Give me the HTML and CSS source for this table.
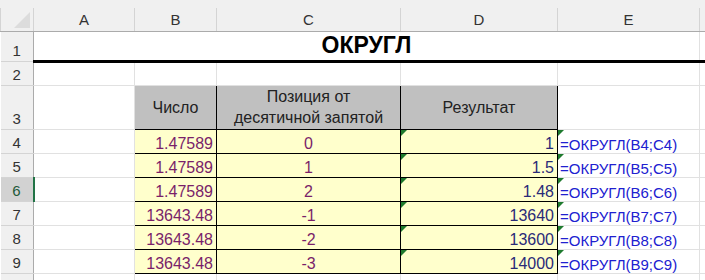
FILE: index.html
```html
<!doctype html>
<html lang="ru">
<head>
    <meta charset="utf-8">
    <title>ОКРУГЛ</title>
    <link rel="stylesheet" href="styles.css">
</head>
<body>
<div class="strip"></div>
<table class="sheet">
    <colgroup>
        <col class="c-hdr"><col class="c-a"><col class="c-b"><col class="c-c"><col class="c-d"><col class="c-e"><col class="c-f">
    </colgroup>
    <tr class="r-cols">
        <th class="corner"><span class="tri"></span></th>
        <th>A</th><th>B</th><th>C</th><th>D</th><th>E</th><th></th>
    </tr>
    <tr class="r1">
        <th class="rh">1</th>
        <td class="title" colspan="5">ОКРУГЛ</td>
        <td class="thick"></td>
    </tr>
    <tr class="r2">
        <th class="rh">2</th>
        <td></td><td></td><td></td><td></td><td></td><td></td>
    </tr>
    <tr class="r3">
        <th class="rh">3</th>
        <td></td>
        <td class="head">Число</td>
        <td class="head">Позиция от<br>десятичной запятой</td>
        <td class="head">Результат</td>
        <td class="after"></td><td></td>
    </tr>
    <tr>
        <th class="rh">4</th><td></td>
        <td class="num val">1.47589</td><td class="pos">0</td><td class="num res flag">1</td>
        <td class="formula flag after">=ОКРУГЛ(B4;C4)</td><td></td>
    </tr>
    <tr>
        <th class="rh">5</th><td></td>
        <td class="num val">1.47589</td><td class="pos">1</td><td class="num res flag">1.5</td>
        <td class="formula flag after">=ОКРУГЛ(B5;C5)</td><td></td>
    </tr>
    <tr>
        <th class="rh active">6</th><td></td>
        <td class="num val">1.47589</td><td class="pos">2</td><td class="num res flag">1.48</td>
        <td class="formula flag after">=ОКРУГЛ(B6;C6)</td><td></td>
    </tr>
    <tr>
        <th class="rh">7</th><td></td>
        <td class="num val">13643.48</td><td class="pos">-1</td><td class="num res flag">13640</td>
        <td class="formula flag after">=ОКРУГЛ(B7;C7)</td><td></td>
    </tr>
    <tr>
        <th class="rh">8</th><td></td>
        <td class="num val">13643.48</td><td class="pos">-2</td><td class="num res flag">13600</td>
        <td class="formula flag after">=ОКРУГЛ(B8;C8)</td><td></td>
    </tr>
    <tr>
        <th class="rh">9</th><td></td>
        <td class="num val">13643.48</td><td class="pos">-3</td><td class="num res flag">14000</td>
        <td class="formula flag after">=ОКРУГЛ(B9;C9)</td><td></td>
    </tr>
    <tr class="r10">
        <th class="rh"></th>
        <td></td><td></td><td></td><td></td><td></td><td></td>
    </tr>
</table>
</body>
</html>
```

FILE: styles.css
```css
body {
	margin: 0;
	background: #ffffff;
	font-family: "Liberation Sans", Arial, sans-serif;
	overflow: hidden;
}
.strip {
	height: 8px;
	background: #f0f0f0;
}
table.sheet {
	border-collapse: collapse;
	table-layout: fixed;
	width: 720px;
}
col.c-hdr { width: 33px; }
col.c-a { width: 101px; }
col.c-b { width: 82px; }
col.c-c { width: 184px; }
col.c-d { width: 157px; }
col.c-e { width: 142px; }
col.c-f { width: 21px; }

td, th {
	padding: 0 3px;
	border: 1px solid #e1e1e1;
	font-size: 16px;
	font-weight: normal;
	white-space: nowrap;
	overflow: hidden;
	vertical-align: bottom;
}

/* column letters */
tr.r-cols {
	height: 23px;
}
tr.r-cols th {
	background: #f0f0f0;
	color: #333333;
	text-align: center;
	vertical-align: middle;
	border-top: none;
	border-left: 1px solid #d4d4d4;
	border-right: 1px solid #d4d4d4;
	border-bottom: 1px solid #ababab;
	font-size: 15px;
}
th.corner {
	position: relative;
}
.tri {
	position: absolute;
	right: 3px;
	bottom: 3px;
	width: 0;
	height: 0;
	border-left: 16px solid transparent;
	border-bottom: 16px solid #dcdcdc;
}

/* row numbers */
th.rh {
	background: #f0f0f0;
	color: #333333;
	text-align: center;
	padding: 0 0 2px;
	font-size: 15px;
	border-left: none;
	border-top: 1px solid #d4d4d4;
	border-bottom: 1px solid #d4d4d4;
	border-right: 1px solid #ababab;
}
th.rh.active {
	background: #d2d2d2;
	color: #1e5a3a;
	border-right: 2px solid #217346;
}

tr { height: 24px; }
tr.r1 { height: 30px; }
tr.r3 { height: 44px; }
tr.r10 { height: 24px; }

td.title {
	text-align: center;
	vertical-align: middle;
	font-weight: bold;
	font-size: 23px;
	color: #000000;
	border-bottom: 3px solid #000000;
}
td.thick {
	border-bottom: 3px solid #000000;
}

td.head {
	background: #c0c0c0;
	color: #222222;
	text-align: center;
	vertical-align: middle;
	line-height: 21px;
	border: 1px solid #000000;
}
td.num,
td.pos {
	background: #ffffcc;
	border: 1px solid #000000;
}
td.num { text-align: right; }
td.pos {
	text-align: center;
	color: #7a1f6a;
}
td.val { color: #7a1f6a; }
td.res { color: #2a2a78; }

td.formula {
	color: #2020d0;
	font-size: 15px;
	padding-left: 2px;
}
td.after {
	border-left: 1px solid #000000;
}

/* little green error markers in the top left corner */
td.flag {
	position: relative;
}
td.flag::before {
	content: "";
	position: absolute;
	left: 0;
	top: 0;
	width: 0;
	height: 0;
	border-top: 6px solid #1e7a2e;
	border-right: 6px solid transparent;
}
```
